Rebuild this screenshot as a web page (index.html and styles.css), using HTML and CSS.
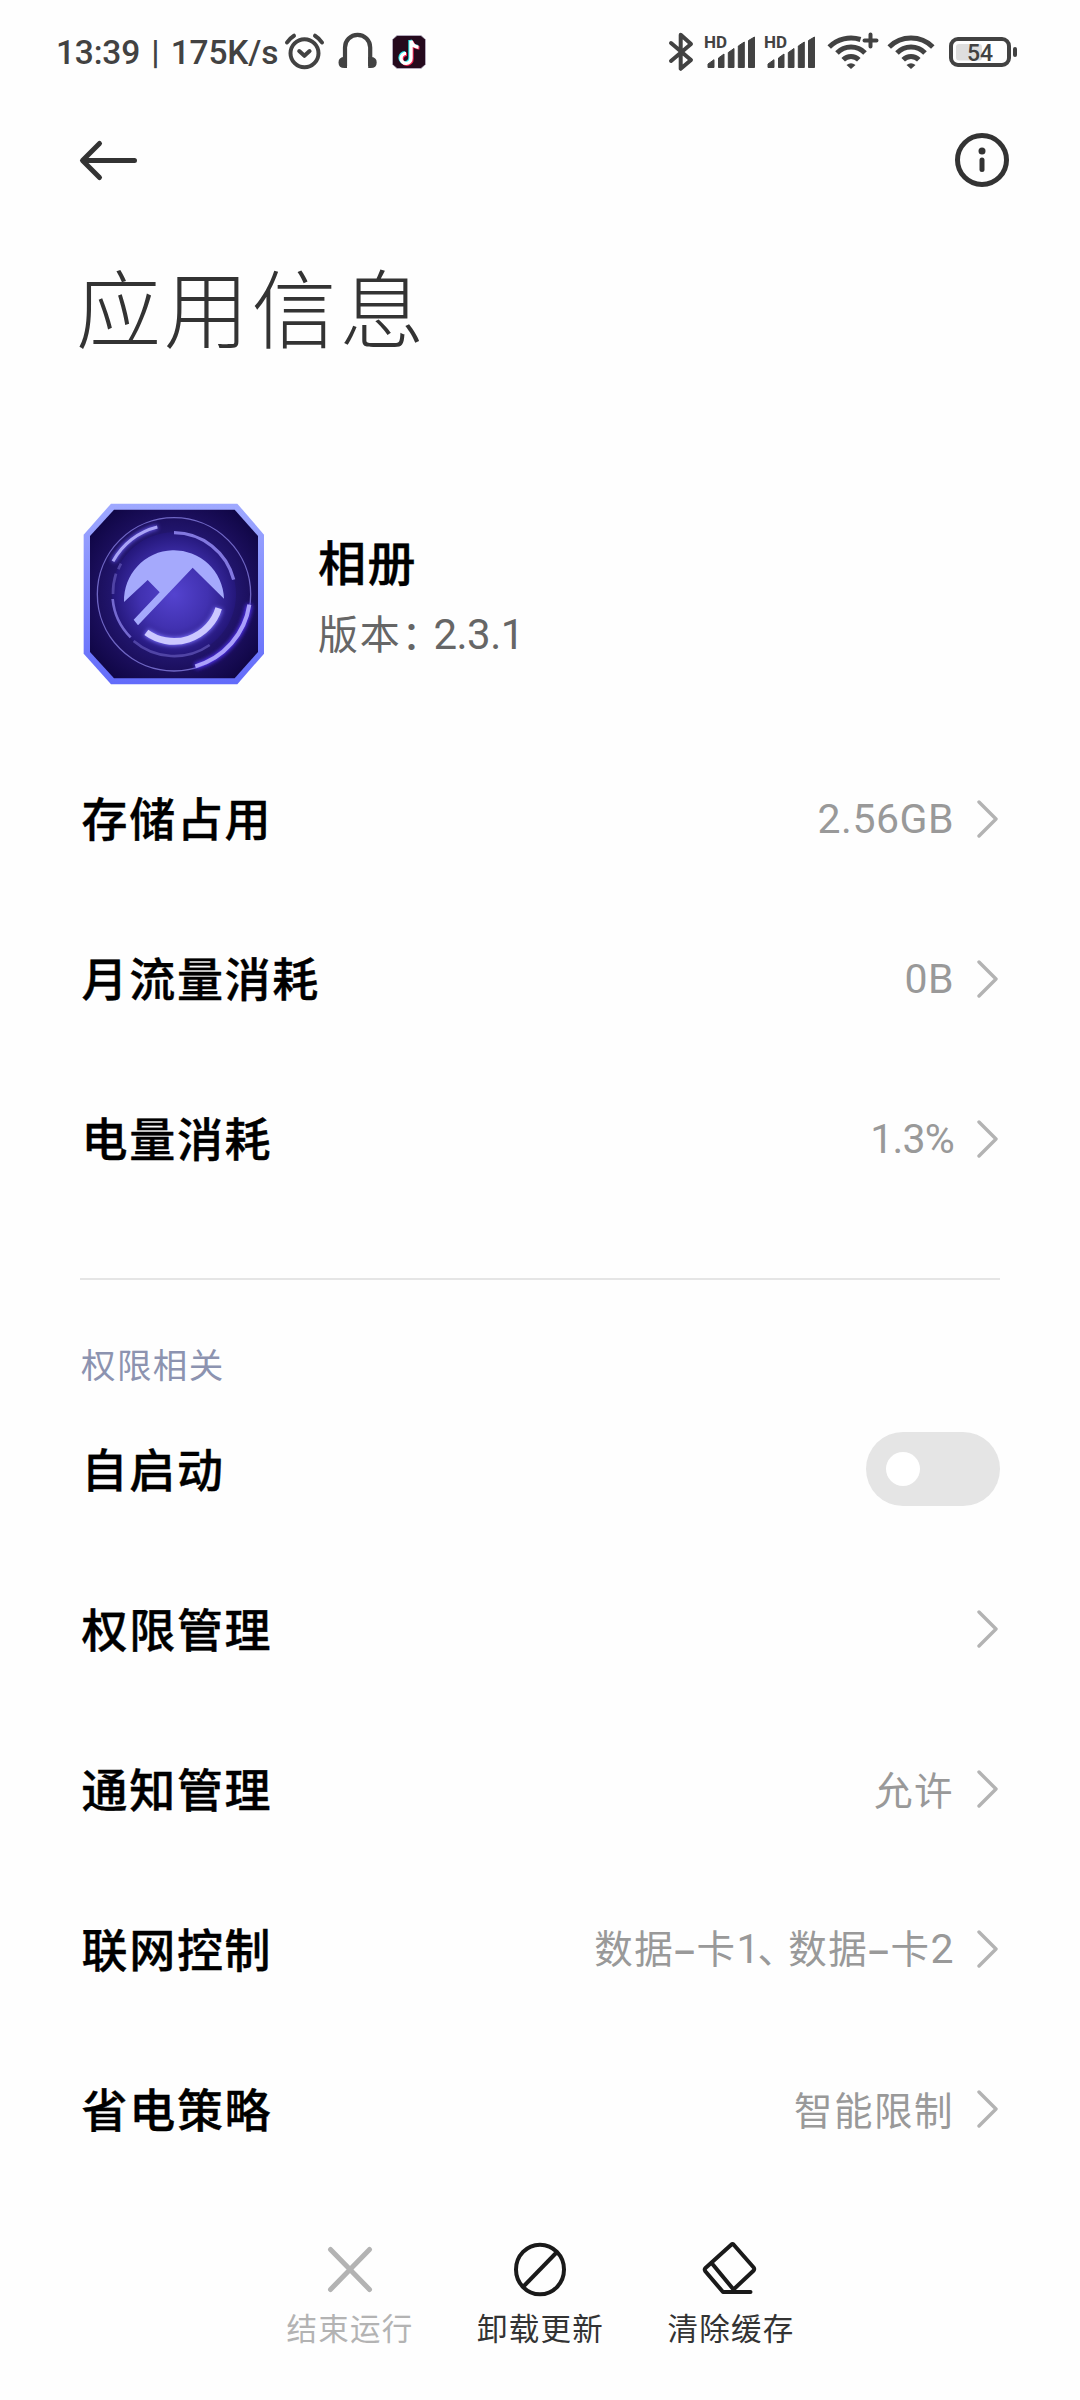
FILE: index.html
```html
<!DOCTYPE html>
<html lang="zh-CN">
<head>
<meta charset="utf-8">
<title>应用信息</title>
<link rel="stylesheet" href="styles.css">
</head>
<body>
<div class="screen">
  <div class="status">
    <span class="clock">13:39 | 175K/s</span>
    <svg class="alarm" viewBox="284 32 42 40" width="42" height="40" fill="none" stroke="#424242" stroke-width="4" stroke-linecap="round" stroke-linejoin="round"><circle cx="304.5" cy="53.3" r="14"/><path d="M299.2 51l5.2 4.8 5.2-4.8M287 42.5q2.5-4 7-6.800M322 42.500q-2.500-4-7-6.800"/></svg>
    <svg class="phones" viewBox="338 32 40 40" width="40" height="40"><path d="M345 66V47.500a12.600 12.600 0 0 1 25.200 0V66" fill="none" stroke="#424242" stroke-width="4.200"/><path d="M347 68h-2.500q-6 0-6-5.500t6-5.500h2.500zM368.200 68h2.500q6 0 6-5.500t-6-5.500h-2.500z" fill="#424242"/></svg>
    <svg class="tiktok" viewBox="392 34 35 36" width="35" height="36"><path d="M397 35.500h24l4.500 4v25l-4.500 4h-24l-4.500-4v-25z" fill="#250a1d" stroke="#b9b4c6" stroke-width=".8"/><g fill="none" stroke-width="3.400"><path d="M410 40v17.500a5 5 0 1 1-5-4.800M410 40q1.500 6 7.500 6.500" stroke="#25e6e8"/><path d="M412 41.500v17.500a5 5 0 1 1-5-4.800M412 41.500q1.500 6 7.500 6.500" stroke="#f0244f"/><path d="M411 40.700v17.500a5 5 0 1 1-5-4.800M411 40.700q1.500 6 7.500 6.500" stroke="#fff"/></g></svg>
    <svg class="bt" viewBox="667 31 28 42" width="28" height="42" fill="none" stroke="#424242" stroke-width="4" stroke-linecap="round" stroke-linejoin="round"><path d="M671 43l20 17-10.300 8.800V34.700L691 44 671 61"/></svg>
    <svg class="signal" viewBox="704 32 54 40" width="54" height="40" fill="#424242"><text class="hd" x="704" y="48">HD</text><path d="M708 67.500v-3.500l6-4.300v7.800zM718.500 67.500v-9.500l5.500-4v13.500zM728.300 67.500v-15l5.700-4v19zM738.300 67.500V46l6-4v25.500zM748.500 67.500V40.500l6-3.500v30.500z" stroke="#424242" stroke-linejoin="round"/></svg>
    <svg class="signal second" viewBox="704 32 54 40" width="54" height="40" fill="#424242"><text class="hd" x="704" y="48">HD</text><path d="M708 67.500v-3.500l6-4.300v7.800zM718.500 67.500v-9.500l5.500-4v13.500zM728.300 67.500v-15l5.700-4v19zM738.300 67.500V46l6-4v25.500zM748.500 67.500V40.500l6-3.500v30.500z" stroke="#424242" stroke-linejoin="round"/></svg>
    <svg class="wifi-plus" viewBox="827 31 52 42" width="52" height="42"><path d="M829.200 47A31 31 0 0 1 860.500 39.500M837 53A19.500 19.500 0 0 1 865 53M843.200 59.800A11 11 0 0 1 858.800 59.800" fill="none" stroke="#424242" stroke-width="5"/><path d="M870.500 34.500v12M864.500 40.500h12" fill="none" stroke="#424242" stroke-width="4" stroke-linecap="round"/><path d="M846.500 65q4.500-3.500 9 0l-4.500 4z" fill="#424242"/></svg>
    <svg class="wifi" viewBox="887 31 48 42" width="48" height="42"><path d="M889.200 47A31 31 0 0 1 932.800 47M897 53A19.500 19.500 0 0 1 925 53M903.200 59.800A11 11 0 0 1 918.800 59.800" fill="none" stroke="#424242" stroke-width="5"/><path d="M906.500 65q4.500-3.500 9 0l-4.500 4z" fill="#424242"/></svg>
    <svg class="battery" viewBox="948 35 70 34" width="70" height="34"><rect x="956" y="44" width="26" height="16.500" rx="3" fill="#dedede"/><rect x="951" y="39" width="58" height="26" rx="7" fill="none" stroke="#424242" stroke-width="4"/><rect x="1013" y="47" width="4" height="10" rx="2" fill="#424242"/><text class="pct" x="980" y="61" text-anchor="middle">54</text></svg>
  </div>

  <header class="bar">
    <svg viewBox="78 138 62 44" width="62" height="44" fill="none" stroke="#333" stroke-width="5" stroke-linecap="round" stroke-linejoin="round"><path d="M134.500 160.500H83M99.500 143.500L82.500 160.500l17 17"/></svg>
    <svg viewBox="954 132 56 56" width="56" height="56" fill="none" stroke="#333" stroke-width="5" stroke-linecap="round"><circle cx="982" cy="160" r="24.500"/><path d="M982 160v9.500"/><circle cx="982" cy="151" r="3.500" fill="#333" stroke="none"/></svg>
  </header>

  <h1 class="title">应用信息</h1>

  <section class="app">
    <svg class="app-icon" viewBox="40 38 544 546" width="182" height="182" fill="none">
      <defs>
        <radialGradient id="bg" cx=".5" cy=".5" r=".65"><stop offset="0" stop-color="#3a2ba5"/><stop offset=".5" stop-color="#241874"/><stop offset=".75" stop-color="#190d58"/><stop offset="1" stop-color="#0d0440"/></radialGradient>
        <radialGradient id="disc" cx=".5" cy=".5" r=".5"><stop offset="0" stop-color="#5443cf"/><stop offset=".55" stop-color="#4131b0"/><stop offset="1" stop-color="#24177a"/></radialGradient>
        <linearGradient id="rim" x1="0" y1="0" x2="0" y2="1"><stop offset="0" stop-color="#9fa9ff"/><stop offset="1" stop-color="#626bfa"/></linearGradient>
        <filter id="glow" x="-30%" y="-30%" width="160%" height="160%"><feGaussianBlur stdDeviation="6"/></filter>
      </defs>
      <path d="M123 40H502L582 133V490L502 582H123L41 490V133Z" fill="url(#rim)"/>
      <path d="M132 58H494L564 137V485L494 564H132L60 485V137Z" fill="url(#bg)"/>
      <circle cx="312" cy="312" r="186" fill="url(#disc)"/>
      <circle cx="312" cy="312" r="230" stroke="#6f66c4" stroke-width="4"/>
      <path d="M162 335A150 150 0 1 1 462 325L368 232L204 405L191 388L269 306L233 269Z" fill="#a5a9fc"/>
      <path d="M229 426A140 140 0 0 0 446 354" stroke="#7d72ff" stroke-width="24" filter="url(#glow)"/>
      <path d="M229 426A140 140 0 0 0 446 354" stroke="#ccc9ff" stroke-width="20"/>
      <path d="M129 213A208 208 0 0 1 262 110" stroke="#6455e8" stroke-width="14" filter="url(#glow)"/>
      <path d="M129 213A208 208 0 0 1 262 110" stroke="#aaa4f6" stroke-width="9"/>
      <path d="M312 127A186 186 0 0 1 491 268" stroke="#8278df" stroke-width="10"/>
      <path d="M538 343A228 228 0 0 1 376 528" stroke="#5736ff" stroke-width="18" filter="url(#glow)"/>
      <path d="M538 343A228 228 0 0 1 376 528" stroke="#aaa0fa" stroke-width="12"/>
      <path d="M128 326A186 186 0 0 0 182 441" stroke="#7469cf" stroke-width="8"/>
      <path d="M191 452A186 186 0 0 0 419 464M129 311A186 186 0 0 1 138 250M145 237A186 186 0 0 1 153 220" stroke="#5044a5" stroke-width="8"/>
    </svg>
    <div class="app-text">
      <div class="app-name">相册</div>
      <div class="version">版本<span class="colon">：</span><span class="num">2.3.1</span></div>
    </div>
  </section>

  <section class="group">
    <div class="row"><span class="label">存储占用</span><span class="value num">2.56GB</span><svg class="chev" viewBox="0 0 22 38"><path d="M2 2l17 17L2 36"/></svg></div>
    <div class="row"><span class="label">月流量消耗</span><span class="value num">0B</span><svg class="chev" viewBox="0 0 22 38"><path d="M2 2l17 17L2 36"/></svg></div>
    <div class="row"><span class="label">电量消耗</span><span class="value num tight">1.3%</span><svg class="chev" viewBox="0 0 22 38"><path d="M2 2l17 17L2 36"/></svg></div>
  </section>

  <section class="group permissions">
    <h2 class="category">权限相关</h2>
    <div class="row"><span class="label">自启动</span><span class="toggle"><span class="knob"></span></span></div>
    <div class="row"><span class="label">权限管理</span><svg class="chev" viewBox="0 0 22 38"><path d="M2 2l17 17L2 36"/></svg></div>
    <div class="row"><span class="label">通知管理</span><span class="value text">允许</span><svg class="chev" viewBox="0 0 22 38"><path d="M2 2l17 17L2 36"/></svg></div>
    <div class="row"><span class="label">联网控制</span><span class="value text">数据<span class="dash">–</span>卡<span class="num one">1</span><span class="comma">、</span>数据<span class="dash">–</span>卡<span class="num">2</span></span><svg class="chev" viewBox="0 0 22 38"><path d="M2 2l17 17L2 36"/></svg></div>
    <div class="row"><span class="label">省电策略</span><span class="value text">智能限制</span><svg class="chev" viewBox="0 0 22 38"><path d="M2 2l17 17L2 36"/></svg></div>
  </section>

  <footer class="actions">
    <div class="action disabled"><svg viewBox="319.500 2240 60 60" width="60" height="60" fill="none" stroke="#b3b3b3" stroke-width="5" stroke-linecap="round"><path d="M330 2250.500l39 40M369 2250.500l-39 40"/></svg><span>结束运行</span></div>
    <div class="action"><svg viewBox="510 2240 60 60" width="60" height="60" fill="none" stroke="#1a1a1a" stroke-width="4"><ellipse cx="540" cy="2270.500" rx="24" ry="24.800"/><path d="M557 2253l-34 35"/></svg><span>卸载更新</span></div>
    <div class="action"><svg viewBox="700.500 2240 60 60" width="60" height="60" fill="none" stroke="#1a1a1a" stroke-width="4" stroke-linecap="round" stroke-linejoin="round"><path d="M731 2245.500q1-1 2 0L753.200 2268.500q1 1.500 0 3L733 2290.500 711.500 2264.500M731 2245.500L705 2269q-1.500 1.500 0 3.500L722.500 2293H750"/></svg><span>清除缓存</span></div>
  </footer>
</div>
</body>
</html>
```
FILE: styles.css
```css
* { box-sizing: border-box; }
body { margin: 0; background: #fefefe; }
svg { display: block; flex: none; }
.screen {
  width: 1080px;
  height: 2400px;
  display: flex;
  flex-direction: column;
  font-family: "Noto Sans CJK SC", sans-serif;
  color: #000;
  background: #fefefe;
}
.num { font-family: Roboto, sans-serif; }

.status {
  height: 104px;
  display: flex;
  align-items: center;
  padding: 0 62px 0 56px;
}
.clock {
  width: 228px;
  padding-top: 2px;
  font: 500 33.500px/40px Roboto, sans-serif;
  letter-spacing: -0.2px;
  word-spacing: 3.200px;
  color: #424242;
  white-space: nowrap;
}
.phones { margin-left: 12px; }
.tiktok { margin-left: 14px; }
.bt { margin-left: auto; }
.signal { margin-left: 9px; }
.signal.second { margin-left: 6px; }
.wifi-plus { margin-left: 9px; }
.wifi { margin-left: 8px; }
.battery { margin-left: 13px; }
.hd { font: 700 17px Roboto, sans-serif; }
.pct { font: 500 23px Roboto, sans-serif; fill: #424242; }

.bar {
  height: 112px;
  display: flex;
  align-items: center;
  justify-content: space-between;
  padding: 0 70px 0 78px;
}
.title {
  margin: 39px 0 0 76px;
  font-size: 85px;
  line-height: 100px;
  font-weight: 300;
  letter-spacing: 2.800px;
  color: #333;
}
.app {
  display: flex;
  align-items: center;
  margin: 148px 0 54px 83px;
}
.app-text {
  margin-left: 53px;
  padding-top: 6px;
}
.app-name {
  font-size: 48px;
  line-height: 72px;
  font-weight: 500;
  letter-spacing: 1.500px;
  -webkit-text-stroke: 0.4px #000;
}
.version {
  font-size: 40px;
  line-height: 72px;
  letter-spacing: 1.800px;
  color: #666;
}
.colon {
  font-feature-settings: "halt";
  margin-right: 10px;
}
.version .num {
  font-size: 42px;
  letter-spacing: -0.5px;
}

.group { padding: 0 80px; }
.row {
  height: 160px;
  display: flex;
  align-items: center;
}
.label {
  margin-right: auto;
  padding: 0 0 6px 1.500px;
  font-size: 46px;
  line-height: 64px;
  font-weight: 500;
  letter-spacing: 1.700px;
  -webkit-text-stroke: 0.4px #000;
}
.value {
  font-size: 38.500px;
  line-height: 56px;
  letter-spacing: 1.500px;
  color: #999;
  white-space: nowrap;
}
.value.text { padding-bottom: 3px; }
.value.num, .value .num { font-size: 41px; letter-spacing: 0.5px; }
.value.tight { letter-spacing: -0.8px; }
.value .one { letter-spacing: -2px; }
.dash { -webkit-text-stroke: 1px #999; }
.comma {
  font-feature-settings: "halt";
  margin-right: 10px;
}
.chev {
  width: 22px;
  height: 38px;
  margin: 0 1px 0 23px;
  fill: none;
  stroke: #b3b3b3;
  stroke-width: 3.400;
  stroke-linecap: round;
  stroke-linejoin: round;
}
.permissions { margin-top: 59px; }
.permissions::before {
  content: "";
  display: block;
  height: 2px;
  background: #e5e5e5;
}
.permissions .label { padding-bottom: 4px; }
.category {
  margin: 58px 0 1px 1px;
  font-size: 34.500px;
  line-height: 50px;
  font-weight: 400;
  letter-spacing: 1.400px;
  color: #8c93b0;
}
.toggle {
  width: 134px;
  height: 74px;
  padding: 20px;
  border-radius: 37px;
  background: #e5e5e5;
}
.knob {
  display: block;
  width: 34px;
  height: 34px;
  border-radius: 50%;
  background: #fff;
}

.actions {
  margin-top: 50px;
  display: flex;
  justify-content: center;
}
.action {
  width: 190.500px;
  display: flex;
  flex-direction: column;
  align-items: center;
  font-size: 30.500px;
  line-height: 44px;
  letter-spacing: 1.300px;
  color: #333;
}
.action span { margin: 6px 0 0 1px; }
.action.disabled { color: #b3b3b3; }
```
